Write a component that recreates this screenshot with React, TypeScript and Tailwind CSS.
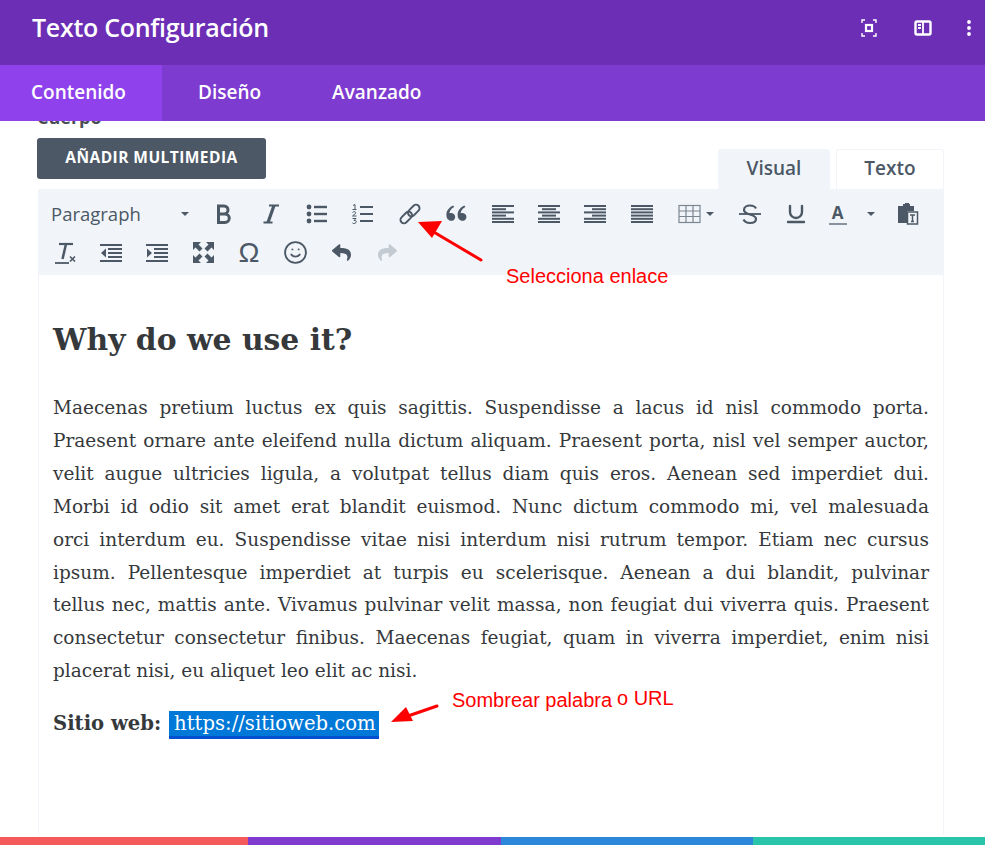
import { Smile, Underline } from "lucide-react";
import { FaReply, FaShare } from "react-icons/fa";
import { RiDoubleQuotesL } from "react-icons/ri";
import type { ReactNode } from "react";

const lines = [
  "Maecenas pretium luctus ex quis sagittis. Suspendisse a lacus id nisl commodo porta.",
  "Praesent ornare ante eleifend nulla dictum aliquam. Praesent porta, nisl vel semper auctor,",
  "velit augue ultricies ligula, a volutpat tellus diam quis eros. Aenean sed imperdiet dui.",
  "Morbi id odio sit amet erat blandit euismod. Nunc dictum commodo mi, vel malesuada",
  "orci interdum eu. Suspendisse vitae nisi interdum nisi rutrum tempor. Etiam nec cursus",
  "ipsum. Pellentesque imperdiet at turpis eu scelerisque. Aenean a dui blandit, pulvinar",
  "tellus nec, mattis ante. Vivamus pulvinar velit massa, non feugiat dui viverra quis. Praesent",
  "consectetur consectetur finibus. Maecenas feugiat, quam in viverra imperdiet, enim nisi",
];

function Btn({ children, w = "w-[46.400px]" }: { children: ReactNode; w?: string }) {
  return <div className={`flex h-[39px] items-center justify-center text-[#4c5866] ${w}`}>{children}</div>;
}

function Caret() {
  return <span className="h-0 w-0 border-x-[4px] border-t-[4px] border-x-transparent border-t-[#4c5866]" />;
}

function Lines({ rows }: { rows: [number, number][] }) {
  return (
    <svg width="24" height="22" viewBox="0 0 24 22" fill="none" stroke="currentColor" strokeWidth="2">
      {rows.map(([a, b], i) => (
        <line key={i} x1={a} x2={b} y1={3 + i * 3.2} y2={3 + i * 3.2} />
      ))}
    </svg>
  );
}

function BulletIcon() {
  return (
    <svg width="24" height="22" viewBox="0 0 24 22" fill="currentColor">
      <circle cx="4" cy="4" r="2.4" />
      <circle cx="4" cy="11" r="2.4" />
      <circle cx="4" cy="18" r="2.4" />
      <rect x="9" y="2.8" width="13" height="2.4" />
      <rect x="9" y="9.8" width="13" height="2.4" />
      <rect x="9" y="16.8" width="13" height="2.4" />
    </svg>
  );
}

function NumberIcon() {
  return (
    <svg width="24" height="22" viewBox="0 0 24 22" fill="none" stroke="currentColor">
      <path d="M2 2.5l2-1v5M1.5 6.5h4" strokeWidth="1" />
      <path d="M1.5 9.5c1-1.500 4-1 3 1l-3 2.500h4" strokeWidth="1" />
      <path d="M1.500 15.500h3.500l-2 2c2 0 3 .5 2 2s-3 1-3.500.5" strokeWidth="1" />
      <path d="M9 4h13M9 11h13M9 18h13" strokeWidth="2.2" />
    </svg>
  );
}

function LinkIcon() {
  return (
    <svg width="24" height="24" viewBox="0 0 24 24" fill="none" stroke="currentColor" strokeWidth="1.900">
      <rect x="9" y="5" width="13.500" height="7" rx="3.500" transform="rotate(-45 15.750 8.500)" />
      <rect x="1.500" y="12" width="13.500" height="7" rx="3.500" transform="rotate(-45 8.250 15.500)" />
    </svg>
  );
}

function StrikeIcon() {
  return (
    <svg width="24" height="24" viewBox="0 0 24 24" fill="none" stroke="currentColor" strokeWidth="2.200">
      <path d="M18 6.500C17 4.500 15 3.500 12 3.500S6 5 6 8c0 5.500 12 3.500 12 9 0 2.500-2.500 4-6 4s-5.500-1.500-6.500-3.500" />
      <path d="M1 12h22" strokeWidth="1.800" />
    </svg>
  );
}

function ExpandIcon() {
  const arrow = "M1 1h8L6.500 3.500 10.500 7.500 7.500 10.500 3.500 6.500 1 9z";
  return (
    <svg width="23" height="23" viewBox="0 0 23 23" fill="currentColor">
      <path d={arrow} />
      <path d={arrow} transform="rotate(90 11.500 11.500)" />
      <path d={arrow} transform="rotate(180 11.500 11.500)" />
      <path d={arrow} transform="rotate(270 11.500 11.500)" />
    </svg>
  );
}

function IndentIcon({ flip }: { flip?: boolean }) {
  return (
    <svg width="24" height="22" viewBox="0 0 24 22" fill="currentColor">
      <rect x="1" y="2" width="22" height="2" />
      <rect x="1" y="18" width="22" height="2" />
      <rect x="9" y="6" width="14" height="2" />
      <rect x="9" y="10" width="14" height="2" />
      <rect x="9" y="14" width="14" height="2" />
      <path d={flip ? "M2 6.500l5 4.500-5 4.500z" : "M7 6.500l-5 4.500 5 4.500z"} />
    </svg>
  );
}

function TableIcon() {
  return (
    <svg width="23" height="20" viewBox="0 0 23 20" fill="none" stroke="#7a8591" strokeWidth="1.2">
      <rect x="1" y="1.500" width="21" height="17" />
      <path d="M1 7h21M1 12.500h21M8 1.500v17M15 1.500v17" />
    </svg>
  );
}

function PasteIcon() {
  return (
    <svg width="24" height="24" viewBox="0 0 24 24">
      <path d="M2 4h5V2h7v2h4v5h-7v12H2z" fill="#4c5866" />
      <rect x="9" y="1" width="4" height="4" fill="#4c5866" />
      <rect x="11.500" y="10" width="10" height="12" fill="#f1f5f9" stroke="#4c5866" strokeWidth="1.500" />
      <path d="M14 13h5M16.500 13v6.500M15 19.500h3" stroke="#4c5866" strokeWidth="1.500" fill="none" />
    </svg>
  );
}

function ClearIcon() {
  return (
    <svg width="24" height="24" viewBox="0 0 24 24" fill="none" stroke="#4c5866">
      <path d="M6 3h14" strokeWidth="2.200" />
      <path d="M13 3L9.500 18" strokeWidth="2.500" />
      <path d="M2 22h14" strokeWidth="1.800" />
      <path d="M17 15.500l5 5M22 15.500l-5 5" strokeWidth="1.600" />
    </svg>
  );
}

function BoldIcon() {
  return (
    <svg width="18" height="22" viewBox="0 0 18 22" fill="none" stroke="currentColor" strokeWidth="3">
      <path d="M3.500 3h5.500a4 4 0 0 1 0 8H3.500zM3.500 11h6.500a4.200 4.200 0 0 1 0 8.500H3.500zM3.500 1.500v19.500" />
    </svg>
  );
}

function ItalicIcon() {
  return (
    <svg width="18" height="22" viewBox="0 0 18 22" fill="none" stroke="currentColor">
      <path d="M7 2.500h10M1.500 19.500h9" strokeWidth="2" />
      <path d="M12 2.500L6 19.500" strokeWidth="3.200" />
    </svg>
  );
}

export default function App() {
  return (
    <div className="relative flex h-[845px] w-[985px] flex-col overflow-hidden bg-white font-['Open_Sans',sans-serif]">
      <header className="flex h-[65px] shrink-0 items-center justify-between bg-[#6b2eb5] pl-[32px]">
        <h1 className="mb-[10px] text-[25px] font-semibold tracking-[-0.3px] text-white">Texto Configuración</h1>
        <div className="mb-[10px] flex items-center text-white">
          <svg className="mr-[37px]" width="16" height="18" viewBox="0 0 16 18" fill="none" stroke="currentColor" strokeWidth="1.400">
            <path d="M1 4V1h3M12 1h3v3M15 14v3h-3M4 17H1v-3" />
            <rect x="5" y="6" width="6" height="6" strokeWidth="2.200" />
          </svg>
          <svg className="mr-[35px]" width="18" height="16" viewBox="0 0 18 16" fill="none" stroke="currentColor" strokeWidth="2.400">
            <rect x="1.500" y="1.500" width="15" height="13" rx="1.500" />
            <path d="M9 1.500v13M4 5h3M4 8h3" strokeWidth="1.800" />
          </svg>
          <svg className="mr-[14px]" width="4" height="16" viewBox="0 0 4 16" fill="currentColor">
            <circle cx="2" cy="2" r="1.900" />
            <circle cx="2" cy="8" r="1.900" />
            <circle cx="2" cy="14" r="1.900" />
          </svg>
        </div>
      </header>

      <nav className="z-10 flex h-[56px] shrink-0 bg-[#7e3bd0] text-[19px] font-semibold text-white">
        <div className="flex w-[162px] items-center bg-[#8f42ec] pb-[2px] pl-[31px]">Contenido</div>
        <div className="flex items-center pb-[2px] pl-[36px]">Diseño</div>
        <div className="flex items-center pb-[2px] pl-[71px]">Avanzado</div>
      </nav>

      <main className="min-h-0 flex-1 px-[37px]">
        <div className="-mt-[16px] mb-[8px] h-[25px] text-[18px] leading-[25px] font-bold text-[#4a4f55]">Cuerpo</div>
        <div className="flex items-start justify-between pr-[4px]">
          <button className="flex h-[41px] w-[229px] items-center justify-center rounded-[3px] bg-[#4c5866] pb-[2px] text-[15.500px] font-bold tracking-[0.45px] text-white">
            AÑADIR MULTIMEDIA
          </button>
          <div className="mt-[11px] flex gap-[6px] text-[19px] font-semibold text-[#4c5866]">
            <div className="flex h-[40px] w-[112px] items-center justify-center rounded-t-[3px] bg-[#f1f5f9] pb-[2px]">Visual</div>
            <div className="flex h-[40px] w-[108px] items-center justify-center rounded-t-[3px] border border-b-0 border-[#f1f5f9] pb-[2px]">Texto</div>
          </div>
        </div>

        <div className="mr-[4px] ml-[1px] flex h-[646px] flex-col border-x border-[#f1f5f9]">
          <div className="-mx-px h-[86px] shrink-0 bg-[#f1f5f9] pt-[5px] pl-[4px]">
            <div className="flex items-center">
              <div className="flex h-[39px] w-[159px] items-center justify-between pr-[12px] pl-[9px] text-[18.500px] text-[#4c5866]">
                <span>Paragraph</span>
                <Caret />
              </div>
              <Btn><BoldIcon /></Btn>
              <Btn><ItalicIcon /></Btn>
              <Btn><BulletIcon /></Btn>
              <Btn><NumberIcon /></Btn>
              <Btn><LinkIcon /></Btn>
              <Btn><RiDoubleQuotesL size={27} /></Btn>
              <Btn><Lines rows={[[1, 23], [1, 15], [1, 23], [1, 15], [1, 23], [1, 23]]} /></Btn>
              <Btn><Lines rows={[[1, 23], [5, 19], [1, 23], [5, 19], [1, 23], [1, 23]]} /></Btn>
              <Btn><Lines rows={[[1, 23], [9, 23], [1, 23], [9, 23], [1, 23], [1, 23]]} /></Btn>
              <Btn><Lines rows={[[1, 23], [1, 23], [1, 23], [1, 23], [1, 23], [1, 23]]} /></Btn>
              <div className="flex h-[39px] w-[62px] items-center gap-[5px] pl-[13px]">
                <TableIcon />
                <Caret />
              </div>
              <Btn><StrikeIcon /></Btn>
              <Btn><Underline size={24} strokeWidth={2.400} /></Btn>
              <div className="flex h-[39px] w-[65px] items-center pl-[9px]">
                <div className="flex w-[18px] flex-col items-center border-b-2 border-[#8a939d] text-[17px] leading-[20px] font-bold text-[#4c5866]">A</div>
                <span className="ml-[20px] flex"><Caret /></span>
              </div>
              <Btn><PasteIcon /></Btn>
            </div>
            <div className="flex items-center">
              <Btn w="w-[46px]"><ClearIcon /></Btn>
              <Btn w="w-[46px]"><IndentIcon /></Btn>
              <Btn w="w-[46px]"><IndentIcon flip /></Btn>
              <Btn w="w-[46px]"><ExpandIcon /></Btn>
              <Btn w="w-[46px]"><span className="font-['Liberation_Sans',sans-serif] text-[28px] leading-none">Ω</span></Btn>
              <Btn w="w-[46px]"><Smile size={25} strokeWidth={1.800} /></Btn>
              <Btn w="w-[46px]"><FaReply size={19} /></Btn>
              <Btn w="w-[46px]"><span className="text-[#c3cad1]"><FaShare size={19} /></span></Btn>
            </div>
          </div>

          <article className="px-[14px] font-['DejaVu_Serif',serif] text-[#36393c]">
            <h2 className="mt-[42px] mb-[28px] text-[29.800px] leading-[46px] font-bold">Why do we use it?</h2>
            <p className="pt-px text-[18.500px] leading-[32.900px]">
              {lines.map((line) => (
                <span key={line} className="block text-justify whitespace-nowrap [text-align-last:justify]">{line}</span>
              ))}
              <span className="block">placerat nisi, eu aliquet leo elit ac nisi.</span>
            </p>
            <p className="mt-[20px] text-[19.600px] leading-[32.900px]">
              <strong>Sitio web: </strong>
              <span className="ml-[1px] inline-block h-[28px] border-b-[3px] border-[#0050d0] bg-[#0078d7] pr-[3px] pl-[5px] leading-[26px] text-white">https://sitioweb.com</span>
            </p>
          </article>
        </div>
      </main>

      <div className="flex h-[8px] shrink-0">
        <div className="w-[248px] bg-[#f45a5a]" />
        <div className="w-[253px] bg-[#7e3bce]" />
        <div className="w-[252px] bg-[#2b87da]" />
        <div className="flex-1 bg-[#29c4a9]" />
      </div>

      {/* annotations lie over the page */}
      <svg className="absolute top-0 left-0" width="985" height="845" fill="red" stroke="red">
        <line x1="481" y1="260" x2="432" y2="231" strokeWidth="3" strokeLinecap="round" />
        <path d="M418 222l24-1-10 17z" stroke="none" />
        <line x1="437" y1="706" x2="408" y2="716" strokeWidth="3" strokeLinecap="round" />
        <path d="M391 722l15-15 7 14z" stroke="none" />
      </svg>
      <span className="absolute top-[264px] left-[506px] font-['Liberation_Sans',sans-serif] text-[20px] leading-[24px] text-[#f00]">Selecciona enlace</span>
      <span className="absolute top-[688px] left-[452px] font-['Liberation_Sans',sans-serif] text-[20px] leading-[24px] text-[#f00]">Sombrear palabra</span>
      <span className="absolute top-[686px] left-[617px] font-['Liberation_Sans',sans-serif] text-[20px] leading-[24px] text-[#f00]">o URL</span>
    </div>
  );
}
